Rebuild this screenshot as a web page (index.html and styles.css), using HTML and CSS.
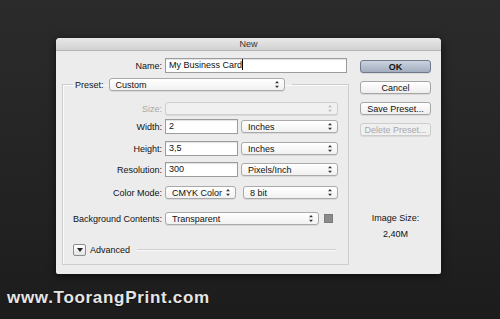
FILE: index.html
```html
<!DOCTYPE html>
<html lang="en">
<head>
    <meta charset="UTF-8">
    <title>New</title>
    <link rel="stylesheet" href="styles.css">
</head>
<body>
    <div class="page">
        <div class="dialog">
            <div class="titlebar">New</div>
            <div class="dialog-body">
                <div class="main">
                    <div class="name-row">
                        <label class="label">Name:</label>
                        <div class="input name-input">My Business Card<span class="caret"></span></div>
                    </div>

                    <fieldset class="group">
                        <legend class="preset">
                            <span>Preset:</span>
                            <div class="select preset-select"><span>Custom</span><svg class="arrows" viewBox="0 0 5 9"><path d="M2.5 0L5 3H0z M2.5 9L5 6H0z"/></svg></div>
                        </legend>

                        <div class="row row-size">
                            <label class="label disabled">Size:</label>
                            <div class="controls">
                                <div class="select wide disabled"><span></span><svg class="arrows" viewBox="0 0 5 9"><path d="M2.5 0L5 3H0z M2.5 9L5 6H0z"/></svg></div>
                            </div>
                        </div>
                        <div class="row row-width">
                            <label class="label">Width:</label>
                            <div class="controls">
                                <div class="input num">2</div>
                                <div class="select unit"><span>Inches</span><svg class="arrows" viewBox="0 0 5 9"><path d="M2.5 0L5 3H0z M2.5 9L5 6H0z"/></svg></div>
                            </div>
                        </div>
                        <div class="row row-height">
                            <label class="label">Height:</label>
                            <div class="controls">
                                <div class="input num">3,5</div>
                                <div class="select unit"><span>Inches</span><svg class="arrows" viewBox="0 0 5 9"><path d="M2.5 0L5 3H0z M2.5 9L5 6H0z"/></svg></div>
                            </div>
                        </div>
                        <div class="row">
                            <label class="label">Resolution:</label>
                            <div class="controls">
                                <div class="input num">300</div>
                                <div class="select unit"><span>Pixels/Inch</span><svg class="arrows" viewBox="0 0 5 9"><path d="M2.5 0L5 3H0z M2.5 9L5 6H0z"/></svg></div>
                            </div>
                        </div>
                        <div class="row row-color">
                            <label class="label">Color Mode:</label>
                            <div class="controls">
                                <div class="select mode"><span>CMYK Color</span><svg class="arrows" viewBox="0 0 5 9"><path d="M2.5 0L5 3H0z M2.5 9L5 6H0z"/></svg></div>
                                <div class="select bits"><span>8 bit</span><svg class="arrows" viewBox="0 0 5 9"><path d="M2.5 0L5 3H0z M2.5 9L5 6H0z"/></svg></div>
                            </div>
                        </div>
                        <div class="row row-bg">
                            <label class="label">Background Contents:</label>
                            <div class="controls">
                                <div class="select bg"><span>Transparent</span><svg class="arrows" viewBox="0 0 5 9"><path d="M2.5 0L5 3H0z M2.5 9L5 6H0z"/></svg></div>
                                <div class="swatch"></div>
                            </div>
                        </div>

                        <div class="advanced">
                            <div class="disclosure"><svg viewBox="0 0 6 4"><path d="M0 0H6L3 4z"/></svg></div>
                            <span>Advanced</span>
                            <div class="rule"></div>
                        </div>
                    </fieldset>
                </div>

                <div class="side">
                    <button class="btn btn-ok">OK</button>
                    <button class="btn">Cancel</button>
                    <button class="btn">Save Preset...</button>
                    <button class="btn" disabled>Delete Preset...</button>

                    <div class="image-size">
                        <div>Image Size:</div>
                        <div>2,40M</div>
                    </div>
                </div>
            </div>
        </div>

        <div class="watermark">www.ToorangPrint.com</div>
    </div>
</body>
</html>
```

FILE: styles.css
```css
* {
    margin: 0;
    padding: 0;
    box-sizing: border-box;
}

body {
    background: linear-gradient(180deg, #2b2b2b 0%, #232323 60%, #1c1c1c 100%);
    min-height: 100vh;
    font-family: 'Liberation Sans', Arial, sans-serif;
    font-size: 9px;
    color: #111;
}

.page {
    padding: 38px 0 0 56px;
}

.dialog {
    width: 385px;
    height: 236px;
    background: #ececec;
    border-radius: 4px 4px 2px 2px;
    box-shadow: 0 2px 8px rgba(0, 0, 0, 0.6);
    display: flex;
    flex-direction: column;
}

.titlebar {
    height: 13px;
    line-height: 12px;
    text-align: center;
    color: #333;
    background: linear-gradient(180deg, #e8e8e8 0%, #d2d2d2 100%);
    border-bottom: 1px solid #b4b4b4;
    border-radius: 4px 4px 0 0;
}

.dialog-body {
    display: flex;
    padding: 7px 10px 0 6px;
}

.main {
    width: 285px;
}

.label {
    text-align: right;
    white-space: nowrap;
}

.label.disabled {
    color: #a8a8a8;
}

.name-row {
    display: grid;
    grid-template-columns: 100px 182px;
    column-gap: 3px;
    align-items: center;
    height: 15px;
}

.input {
    background: #fff;
    border: 1px solid #9c9c9c;
    box-shadow: inset 0 1px 1px rgba(0, 0, 0, 0.12);
    height: 15px;
    line-height: 13px;
    padding: 0 3px;
    white-space: nowrap;
}

.caret {
    display: inline-block;
    width: 1px;
    height: 11px;
    background: #000;
    vertical-align: -2px;
}

.select {
    display: flex;
    align-items: center;
    justify-content: space-between;
    height: 13px;
    padding: 0 5px 0 6px;
    background: linear-gradient(180deg, #ffffff 0%, #f1f1f1 100%);
    border: 1px solid #aaa;
    border-radius: 3px;
    box-shadow: 0 1px 0 rgba(0, 0, 0, 0.08);
    white-space: nowrap;
}

.select.disabled {
    background: #f0f0f0;
    border-color: #cfcfcf;
}

.arrows {
    width: 4px;
    height: 7px;
    fill: #333;
}

.select.disabled .arrows {
    fill: #bbb;
}

.group {
    margin-top: 5px;
    height: 187px;
    border: 1px solid #cdcdcd;
    box-shadow: inset 1px 1px 0 #fafafa;
    padding: 0 10px;
}

.preset {
    display: flex;
    align-items: center;
    gap: 5px;
    padding: 0 7px 0 2px;
    height: 13px;
}

.preset-select {
    width: 176px;
}

.row {
    display: grid;
    grid-template-columns: 89px 1fr;
    column-gap: 3px;
    align-items: center;
    height: 19px;
    margin-top: 2px;
}

.row-size {
    height: 15px;
    margin-top: 10px;
}

.row-width {
    margin-top: 1px;
}

.row-height {
    margin-top: 3px;
}

.row-color {
    margin-top: 4px;
}

.row-bg {
    margin-top: 7px;
}

.controls {
    display: flex;
    align-items: center;
}

.wide {
    width: 173px;
}

.num {
    width: 73px;
}

.unit {
    width: 97px;
    margin-left: 3px;
}

.mode {
    width: 71px;
}

.bits {
    width: 95px;
    margin-left: 7px;
}

.bg {
    width: 154px;
}

.swatch {
    width: 9px;
    height: 9px;
    margin-left: 5px;
    background: #8a8a8a;
    border: 1px solid #7a7a7a;
}

.advanced {
    display: flex;
    align-items: center;
    margin-top: 15px;
    height: 13px;
}

.disclosure {
    width: 13px;
    height: 12px;
    border: 1px solid #8c8c8c;
    border-radius: 2px;
    background: linear-gradient(180deg, #fff 0%, #e4e4e4 100%);
    display: flex;
    align-items: center;
    justify-content: center;
}

.disclosure svg {
    width: 6px;
    height: 4px;
    fill: #222;
}

.advanced span {
    margin-left: 4px;
}

.rule {
    flex: 1;
    margin: 0 2px 0 7px;
    height: 2px;
    border-top: 1px solid #cfcfcf;
    border-bottom: 1px solid #fafafa;
}

.side {
    width: 71px;
    margin-left: 13px;
    padding-top: 2px;
    display: flex;
    flex-direction: column;
    gap: 8px;
}

.btn {
    height: 13px;
    font-family: inherit;
    font-size: 9px;
    color: #111;
    background: linear-gradient(180deg, #ffffff 0%, #eeeeee 100%);
    border: 1px solid #a6a6a6;
    border-radius: 3px;
    box-shadow: 0 1px 0 rgba(0, 0, 0, 0.08);
}

.btn-ok {
    font-weight: bold;
    background: linear-gradient(180deg, #cbd3df 0%, #a2adbf 100%);
    border-color: #6f7a8c;
}

.btn:disabled {
    color: #a8a8a8;
    border-color: #cdcdcd;
    background: #f0f0f0;
}

.image-size {
    margin-top: 69px;
    text-align: center;
    line-height: 11px;
    display: flex;
    flex-direction: column;
    gap: 5px;
}

.watermark {
    margin: 14px 0 0 -49px;
    font-size: 17px;
    line-height: 20px;
    font-weight: bold;
    letter-spacing: 0.7px;
    color: #e6e6e6;
    text-shadow: 0 1px 1px rgba(0, 0, 0, 0.5);
}
```
